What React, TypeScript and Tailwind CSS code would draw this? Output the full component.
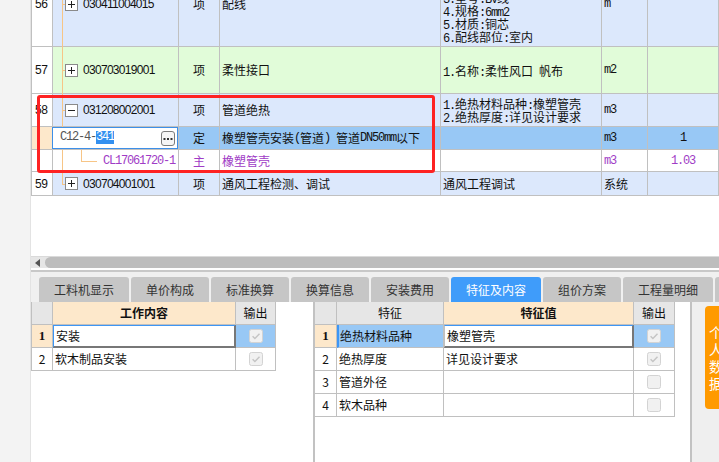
import React from "react";

const C = "border-r border-b border-[#c0c0c0]";
const LINE = "bg-[#f7c586]";

function M({ s }: { s: string }) {
  const parts = s.match(/[\x20-\x7e]+|[^\x20-\x7e]+/g) || [];
  return (
    <>
      {parts.map((p, i) =>
        /^[\x20-\x7e]/.test(p) ? (
          <span key={i} className="whitespace-pre font-['Liberation_Mono',monospace] tracking-[-1.2px]">
            {p}
          </span>
        ) : (
          <span key={i}>{p}</span>
        )
      )}
    </>
  );
}

function Box({ minus }: { minus?: boolean }) {
  return (
    <span className="relative z-10 flex h-[13px] w-[13px] shrink-0 items-center justify-center border border-[#8a8a8a] bg-white">
      <svg width="11" height="11" viewBox="0 0 11 11">
        <path d="M2 5.5h7" stroke="#222" strokeWidth="1" />
        {!minus && <path d="M5.5 2v7" stroke="#222" strokeWidth="1" />}
      </svg>
    </span>
  );
}

function TreeCode({ code, minus, last }: { code: string; minus?: boolean; last?: boolean }) {
  return (
    <>
      <span className={`absolute left-[9px] top-0 w-px ${LINE} ${last ? "h-1/2" : "-bottom-px"}`} />
      <span className={`absolute left-[9px] top-1/2 h-px w-[4px] ${LINE}`} />
      <div className="relative flex h-full items-center pl-[12px]">
        <Box minus={minus} />
        <span className="ml-[5px] font-['Liberation_Sans',sans-serif] tracking-[-0.7px]">{code}</span>
      </div>
    </>
  );
}

type RowProps = {
  h: string;
  bg: string;
  num?: string;
  numBg?: string;
  code: React.ReactNode;
  type: string;
  name: string;
  feat?: string[];
  unit?: string;
  qty?: string;
  text?: string;
};

function Row({ h, bg, num, numBg = "bg-white", code, type, name, feat = [], unit = "", qty = "", text = "text-[#111]" }: RowProps) {
  return (
    <div className={`grid grid-cols-[21px_126px_41px_221px_161px_46px_71px] ${h} ${text}`}>
      <div className={`${C} ${numBg} flex items-center pl-[3px] font-['Liberation_Sans',sans-serif] tracking-[-0.5px] text-[#111]`}>{num}</div>
      <div className={`${C} ${bg} relative`}>{code}</div>
      <div className={`${C} ${bg} flex items-center justify-center`}>{type}</div>
      <div className={`${C} ${bg} flex items-center whitespace-nowrap pl-[2px]`}>
        <M s={name} />
      </div>
      <div className={`${C} ${bg} flex flex-col justify-center whitespace-nowrap pl-[2px] leading-[13px]`}>
        {feat.map((f) => (
          <div key={f} className="flex h-[13px] items-baseline">
            <M s={f} />
          </div>
        ))}
      </div>
      <div className={`${C} ${bg} flex items-center pl-[2px]`}>
        <M s={unit} />
      </div>
      <div className={`${C} ${bg} flex items-center justify-center`}>
        <M s={qty} />
      </div>
    </div>
  );
}

function Check({ checked }: { checked?: boolean }) {
  return (
    <svg width="14" height="14" viewBox="0 0 14 14">
      <rect x="0.5" y="0.5" width="13" height="13" rx="2" fill="#f1f1f1" stroke="#d3d3d3" />
      {checked && <path d="M3.6 7.2l2.3 2.3 4.6-4.8" fill="none" stroke="#c4c4c4" strokeWidth="1.4" />}
    </svg>
  );
}

const mono = "font-['Liberation_Mono',monospace] tracking-[-1.2px]";

const tabs: { t: string; w: string; active?: boolean }[] = [
  { t: "工料机显示", w: "w-[90px]" },
  { t: "单价构成", w: "w-[78px]" },
  { t: "标准换算", w: "w-[78px]" },
  { t: "换算信息", w: "w-[78px]" },
  { t: "安装费用", w: "w-[78px]" },
  { t: "特征及内容", w: "w-[90px]", active: true },
  { t: "组价方案", w: "w-[78px]" },
  { t: "工程量明细", w: "w-[90px]" },
  { t: "", w: "w-[78px]" },
];

const peach = "bg-[#fde8cb]";
const gray = "bg-[#e6e6e6]";
const sel = "bg-[#98c8f5]";

export default function App() {
  return (
    <div className="flex h-[462px] w-[719px] overflow-hidden bg-white font-['Noto_Sans_CJK_SC','Liberation_Sans',sans-serif] text-[12px] text-[#111]">
      <div className="w-[31px] shrink-0 border-r border-[#e3e3e3] bg-[#f3f3f3]" />
      <div className="flex w-[688px] shrink-0 flex-col">
        {/* upper grid */}
        <div className="relative h-[256px] overflow-hidden bg-white">
          <div className="-mt-[38px] border-l border-[#c0c0c0]">
            <Row
              h="h-[85px]"
              bg="bg-[#dce8fc]"
              num="56"
              code={<TreeCode code="030411004015" />}
              type="项"
              name="配线"
              feat={["1.名称:管内穿线", "2.配线形式:照明线路", "3.型号:BV线", "4.规格:6mm2", "5.材质:铜芯", "6.配线部位:室内"]}
              unit="m"
            />
            <Row
              h="h-[47px]"
              bg="bg-[#e1fcd9]"
              num="57"
              code={<TreeCode code="030703019001" />}
              type="项"
              name="柔性接口"
              feat={["1.名称:柔性风口 帆布"]}
              unit="m2"
            />
            <Row
              h="h-[33px]"
              bg="bg-[#dce8fc]"
              num="58"
              code={<TreeCode code="031208002001" minus />}
              type="项"
              name="管道绝热"
              feat={["1.绝热材料品种:橡塑管壳", "2.绝热厚度:详见设计要求"]}
              unit="m3"
            />
            <Row
              h="h-[23px]"
              bg={sel}
              numBg={peach}
              code={
                <div className="absolute -left-px top-0 right-0 bottom-0 flex items-start border border-[#3d8fe8] bg-white pl-[7px] pt-[3px]">
                  <span className={`${mono} leading-[13px] text-[#555]`}>
                    C12-4-<span className="inline-block h-[13px] bg-[#3390f0] text-white">341</span>
                  </span>
                  <span className="ml-auto mr-[2px] flex h-[15px] w-[14px] items-center justify-center rounded-[3px] border border-[#7c7c7c] bg-[#f6f6f6]">
                    <svg width="10" height="4" viewBox="0 0 10 4">
                      <rect x="0.5" y="1" width="2" height="2" fill="#333" />
                      <rect x="4" y="1" width="2" height="2" fill="#333" />
                      <rect x="7.5" y="1" width="2" height="2" fill="#333" />
                    </svg>
                  </span>
                </div>
              }
              type="定"
              name="橡塑管壳安装(管道) 管道DN50mm以下"
              unit="m3"
              qty="1"
            />
            <Row
              h="h-[22px]"
              bg="bg-white"
              text="text-[#a03cc6]"
              code={
                <>
                  <span className={`absolute left-[9px] top-0 -bottom-px w-px ${LINE}`} />
                  <span className={`absolute left-[28px] top-0 h-1/2 w-px ${LINE}`} />
                  <span className={`absolute left-[28px] top-1/2 h-px w-[16px] ${LINE}`} />
                  <div className={`flex h-full items-center pl-[50px] ${mono}`}>CL17061720-1</div>
                </>
              }
              type="主"
              name="橡塑管壳"
              unit="m3"
              qty="1.03"
            />
            <Row
              h="h-[24px]"
              bg="bg-[#dce8fc]"
              num="59"
              code={<TreeCode code="030704001001" last />}
              type="项"
              name="通风工程检测、调试"
              feat={["通风工程调试"]}
              unit="系统"
            />
          </div>
          <div className="pointer-events-none absolute left-[6px] top-[95px] h-[78px] w-[398px] rounded-[3px] border-[3px] border-[#fe2222]" />
        </div>

        {/* scrollbar */}
        <div className="flex h-[12px] items-center border-t border-[#dadada] bg-[#e6e6e6]">
          <svg className="ml-[4px]" width="5" height="8" viewBox="0 0 5 8">
            <path d="M5 0v8L0 4z" fill="#555" />
          </svg>
          <div className="ml-[5px] h-[11px] flex-1 rounded-l-full bg-[#bdbdbd]" />
        </div>
        <div className="h-[2px] bg-white" />
        <div className="h-[2px] bg-[#c8c8c8]" />

        {/* tabs */}
        <div className="flex h-[30px] gap-[2px] overflow-hidden bg-[#f0f0f0] pl-[8px] pt-[5px]">
          {tabs.map((t, i) => (
            <div
              key={i}
              className={`flex h-[25px] shrink-0 items-center justify-center rounded-t-[3px] ${t.w} ${
                t.active ? "bg-[#3f9cfa] text-white" : "bg-[#c6c6c6] text-[#333]"
              }`}
            >
              {t.t}
            </div>
          ))}
        </div>

        {/* bottom panels */}
        <div className="flex flex-1">
          <div className="w-[282px] shrink-0 bg-white">
            <div className="grid w-[245px] grid-cols-[21px_183px_40px] border-l border-[#c0c0c0]">
              <div className={`${C} ${gray} h-[23px]`} />
              <div className={`${C} ${peach} flex items-center justify-center font-bold`}>工作内容</div>
              <div className={`${C} ${gray} flex items-center justify-center`}>输出</div>

              <div className={`${C} ${peach} flex h-[23px] items-center justify-center font-['Liberation_Serif',serif] text-[13px] font-bold`}>1</div>
              <div className="flex items-center border-t border-l border-r-2 border-b-2 border-t-[#3d96f5] border-l-[#3d96f5] border-r-[#777] border-b-[#777] bg-white pl-[2px]">安装</div>
              <div className={`${C} ${sel} flex items-center justify-center`}>
                <Check checked />
              </div>

              <div className={`${C} flex h-[23px] items-center justify-center bg-white`}>2</div>
              <div className={`${C} flex items-center bg-white pl-[2px]`}>软木制品安装</div>
              <div className={`${C} flex items-center justify-center bg-white`}>
                <Check checked />
              </div>
            </div>
          </div>
          <div className="w-[2px] shrink-0 bg-[#c2c2c2]" />
          <div className="w-[375px] shrink-0 bg-white">
            <div className="grid w-[360px] grid-cols-[22px_107px_190px_41px]">
              <div className={`${C} ${gray} h-[23px]`} />
              <div className={`${C} ${gray} flex items-center justify-center`}>特征</div>
              <div className={`${C} ${peach} flex items-center justify-center font-bold`}>特征值</div>
              <div className={`${C} ${gray} flex items-center justify-center`}>输出</div>

              <div className={`${C} ${peach} flex h-[23px] items-center justify-center font-['Liberation_Serif',serif] text-[13px] font-bold`}>1</div>
              <div className={`${C} ${sel} flex items-center border-l-2 border-l-[#3d96f5] pl-px`}>绝热材料品种</div>
              <div className="flex items-center border-t border-l border-r-2 border-b-2 border-t-[#3d96f5] border-l-[#c0c0c0] border-r-[#777] border-b-[#777] bg-white pl-[2px]">橡塑管壳</div>
              <div className={`${C} ${sel} flex items-center justify-center`}>
                <Check checked />
              </div>

              <div className={`${C} flex h-[23px] items-center justify-center bg-white`}>2</div>
              <div className={`${C} flex items-center bg-white pl-[2px]`}>绝热厚度</div>
              <div className={`${C} flex items-center bg-white pl-[2px]`}>详见设计要求</div>
              <div className={`${C} flex items-center justify-center bg-white`}>
                <Check checked />
              </div>

              <div className={`${C} flex h-[23px] items-center justify-center bg-white`}>3</div>
              <div className={`${C} flex items-center bg-white pl-[2px]`}>管道外径</div>
              <div className={`${C} bg-white`} />
              <div className={`${C} flex items-center justify-center bg-white`}>
                <Check />
              </div>

              <div className={`${C} flex h-[23px] items-center justify-center bg-white`}>4</div>
              <div className={`${C} flex items-center bg-white pl-[2px]`}>软木品种</div>
              <div className={`${C} bg-white`} />
              <div className={`${C} flex items-center justify-center bg-white`}>
                <Check />
              </div>
            </div>
          </div>
          <div className="w-[2px] shrink-0 bg-[#c2c2c2]" />
          <div className="flex-1 bg-[#efefef] pl-[13px] pt-[4px]">
            <div className="flex h-[103px] w-[30px] items-center rounded-l-[4px] bg-[#ff9a00] pl-[4px] text-[14px] leading-[17px] text-white">
              <span>
                个<br />人<br />数<br />据
              </span>
            </div>
          </div>
        </div>
      </div>
    </div>
  );
}
